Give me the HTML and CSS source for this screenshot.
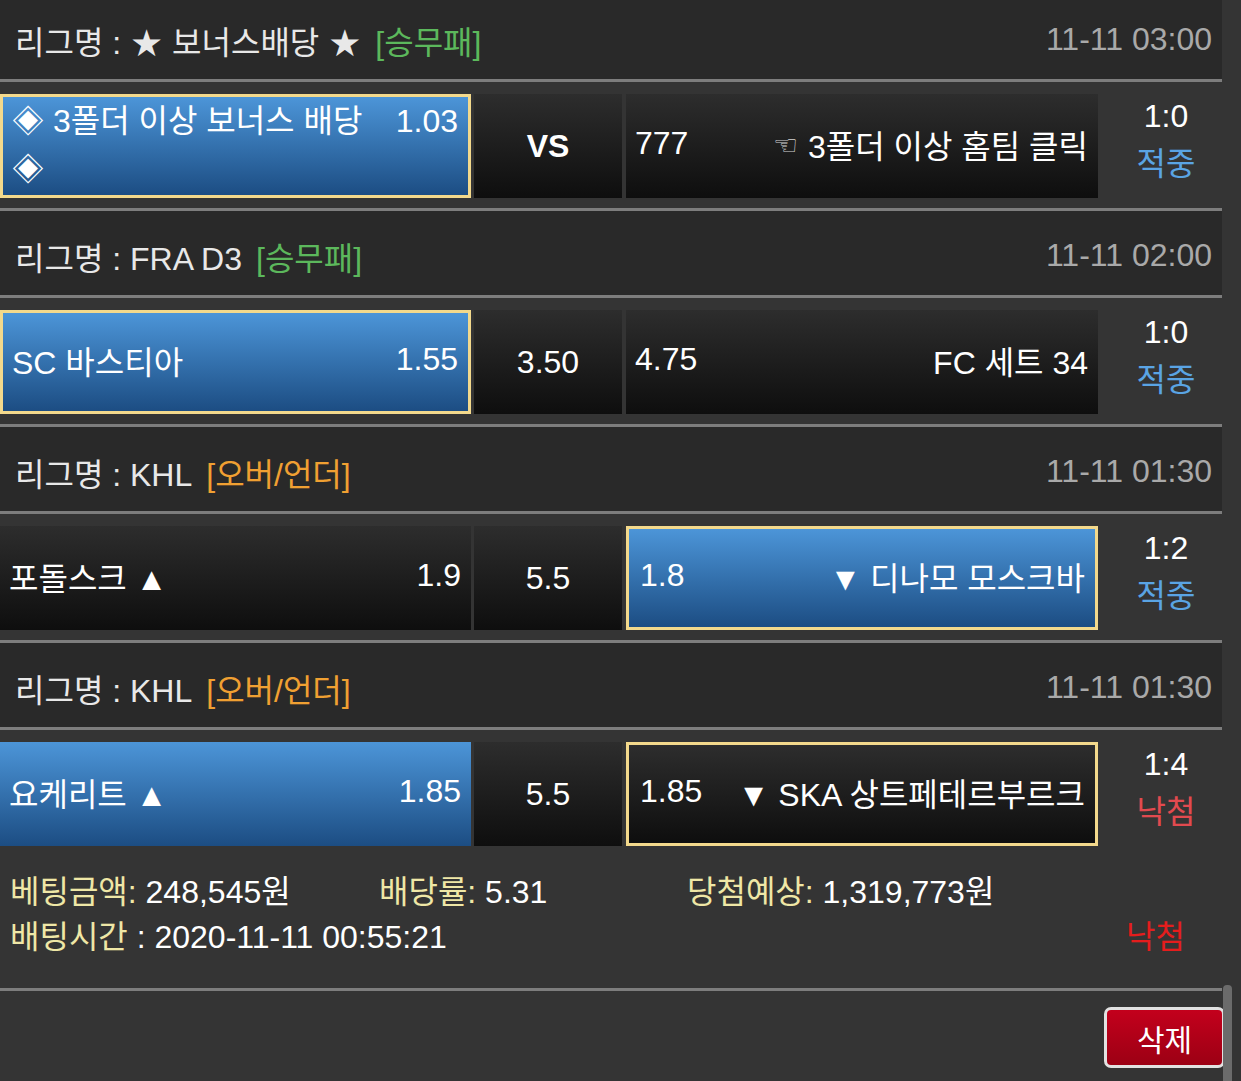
FILE: index.html
```html
<!DOCTYPE html>
<html lang="ko">
<head>
<meta charset="utf-8">
<title>배팅내역</title>
<link rel="stylesheet" href="styles.css">
</head>
<body>
<div class="slip">
  <div class="league">
    <span class="lname">리그명 : <span class="star">★</span> 보너스배당 <span class="star">★</span></span><span class="type wdl">[승무패]</span>
    <span class="date">11-11 03:00</span>
  </div>
  <div class="match">
    <div class="cell home blue picked multi"><span class="team wrap">◈ 3폴더 이상 보너스 배당 ◈</span><span class="odd">1.03</span></div>
    <div class="cell draw dark"><b>VS</b></div>
    <div class="cell away dark"><span class="odd">777</span><span class="team"><span class="hand">☜</span>3폴더 이상 홈팀 클릭</span></div>
    <div class="result"><div>1:0</div><div class="hit">적중</div></div>
  </div>

  <div class="league">
    <span class="lname">리그명 : FRA D3</span><span class="type wdl">[승무패]</span>
    <span class="date">11-11 02:00</span>
  </div>
  <div class="match">
    <div class="cell home blue picked"><span class="team">SC 바스티아</span><span class="odd">1.55</span></div>
    <div class="cell draw dark">3.50</div>
    <div class="cell away dark"><span class="odd">4.75</span><span class="team">FC 세트 34</span></div>
    <div class="result"><div>1:0</div><div class="hit">적중</div></div>
  </div>

  <div class="league">
    <span class="lname">리그명 : KHL</span><span class="type ou">[오버/언더]</span>
    <span class="date">11-11 01:30</span>
  </div>
  <div class="match">
    <div class="cell home dark"><span class="team">포돌스크 ▲</span><span class="odd">1.9</span></div>
    <div class="cell draw dark">5.5</div>
    <div class="cell away blue picked"><span class="odd">1.8</span><span class="team">▼ 디나모 모스크바</span></div>
    <div class="result"><div>1:2</div><div class="hit">적중</div></div>
  </div>

  <div class="league">
    <span class="lname">리그명 : KHL</span><span class="type ou">[오버/언더]</span>
    <span class="date">11-11 01:30</span>
  </div>
  <div class="match last">
    <div class="cell home blue"><span class="team">요케리트 ▲</span><span class="odd">1.85</span></div>
    <div class="cell draw dark">5.5</div>
    <div class="cell away dark picked"><span class="odd">1.85</span><span class="team">▼ SKA 상트페테르부르크</span></div>
    <div class="result"><div>1:4</div><div class="miss">낙첨</div></div>
  </div>

  <div class="info">
    <div class="info-row1">
      <span><span class="lbl">베팅금액:</span> 248,545원</span>
      <span><span class="lbl">배당률:</span> 5.31</span>
      <span><span class="lbl">당첨예상:</span> 1,319,773원</span>
    </div>
    <div class="info-row2">
      <span><span class="lbl">배팅시간</span> : 2020-11-11 00:55:21</span>
      <span class="lost">낙첨</span>
    </div>
  </div>

  <div class="actions">
    <button class="del" type="button">삭제</button>
  </div>
</div>
<div class="scrollbar"></div>
</body>
</html>
```
FILE: styles.css
```css
* { box-sizing: border-box; }

html, body {
  margin: 0;
  height: 100%;
}

body {
  background: #343434;
  color: #ffffff;
  font-family: "Liberation Sans", Arial, "Noto Sans CJK KR", sans-serif;
  font-size: 32px;
  overflow: hidden;
  position: relative;
}

.slip {
  width: 1222px;
  margin-top: -5px;
}

.league {
  height: 87px;
  display: flex;
  align-items: center;
  padding: 5px 10px 0 15px;
  background: #292929;
  border-bottom: 3px solid #7d7d7d;
  color: #e8e8e8;
  white-space: nowrap;
}

.star {
  font-family: "DejaVu Sans", sans-serif;
  font-size: 37px;
  line-height: 1;
  vertical-align: -2px;
}

.type { margin-left: 14px; }
.wdl { color: #5cb85c; }
.ou { color: #f0a032; }

.date {
  margin-left: auto;
  color: #a9a9a9;
}

.match {
  display: flex;
  align-items: flex-start;
  height: 129px;
  padding: 12px 0 10px;
  background: #343434;
  border-bottom: 3px solid #7d7d7d;
}

.match.last {
  height: 116px;
  padding-bottom: 0;
  border-bottom: none;
}

.cell {
  height: 104px;
  display: flex;
  align-items: center;
  justify-content: space-between;
  padding: 0 9px 5px;
  color: #ffffff;
  white-space: nowrap;
}

.cell.picked {
  border: 3px solid #f3d98c;
}

.home { width: 471px; margin-right: 3px; padding-right: 10px; }
.draw { width: 148px; margin-right: 4px; justify-content: center; padding: 1px 0 0; }
.away { width: 472px; padding-right: 10px; }
.away.picked { padding-left: 11px; }

.cell.multi {
  align-items: flex-start;
  padding-top: 0;
  padding-bottom: 0;
  line-height: 48px;
}

.blue { background: linear-gradient(#4c95d8, #1c4d83); }
.dark { background: linear-gradient(#2d2d2d, #0e0e0e); }

.draw b { font-weight: bold; }

.team.wrap {
  white-space: normal;
  max-width: 360px;
}

.home .odd, .away .team { text-align: right; }

.hand {
  font-family: "DejaVu Sans", sans-serif;
  font-size: 28px;
  color: #d2d2d2;
  vertical-align: 3px;
  margin-right: 10px;
}

.result {
  width: 124px;
  padding-left: 12px;
  margin-top: -2px;
  text-align: center;
  line-height: 48px;
}

.hit { color: #5aa4e4; }
.miss { color: #e24a4f; }

.info {
  height: 145px;
  padding: 24px 0 0 10px;
  border-bottom: 3px solid #7d7d7d;
  line-height: 45px;
  white-space: nowrap;
}

.info-row1 {
  display: grid;
  grid-template-columns: 369px 308px 1fr;
}

.info-row2 {
  display: flex;
  justify-content: space-between;
  padding-right: 37px;
}

.lbl { color: #efe7a6; }
.lost { color: #e41d1d; }

.actions {
  display: flex;
  justify-content: flex-end;
  padding-top: 16px;
  margin-right: -3px;
}

.del {
  width: 121px;
  height: 61px;
  border: 3px solid #e2e2e2;
  border-radius: 7px;
  background: linear-gradient(#c3001c, #9c0014);
  color: #ffffff;
  font-family: "Liberation Sans", Arial, "Noto Sans CJK KR", sans-serif;
  font-size: 30px;
  padding: 0;
}

.scrollbar {
  position: absolute;
  left: 1223px;
  top: 985px;
  width: 9px;
  height: 100px;
  background: #6b6b6b;
  border-radius: 4px 4px 0 0;
}
```
